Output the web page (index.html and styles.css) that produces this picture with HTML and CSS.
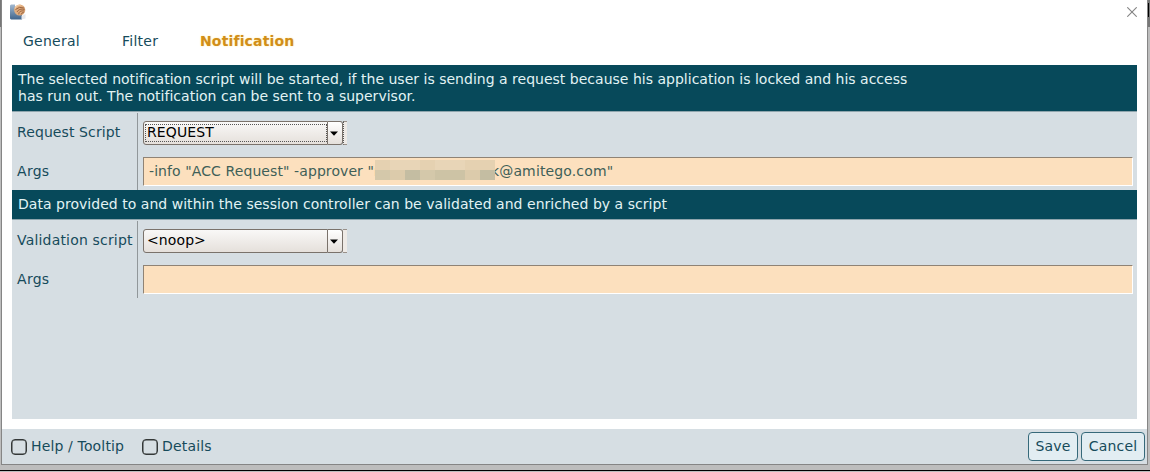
FILE: index.html
```
<!DOCTYPE html>
<html lang="en">
<head>
<meta charset="utf-8">
<title>Notification settings</title>
<link rel="stylesheet" href="styles.css">
</head>
<body>
<div class="desktop">
  <main class="window">
    <header class="titlebar">
      <svg class="app-icon" width="16" height="16" viewBox="0 0 16 16">
        <defs>
          <linearGradient id="blue" x1="0" y1="0" x2="0" y2="1"><stop offset="0" stop-color="#a3b9d0"/><stop offset="1" stop-color="#41658c"/></linearGradient>
          <clipPath id="disc"><circle cx="9.700" cy="6" r="5"/></clipPath>
        </defs>
        <path d="M0 1.500l1-1h4v7l7 3v5H1l-1-1z" fill="url(#blue)"/>
        <path d="M11.500 12l4-2v4.500l-4 1z" fill="#e6e9ee"/>
        <circle cx="9.700" cy="6" r="5.600" fill="#e0ac7e"/>
        <g clip-path="url(#disc)" fill="none" stroke="#85502f" stroke-width=".75">
          <path d="M5.500 5.500q3.500-3.500 9-1.500M7 8q2-4 8-2.500M8.700 10.500q0-4.500 6-3.500M11 11q0-3 4-2.500"/>
        </g>
        <path d="M4.800 4.500q2-3.500 6-3.500" fill="none" stroke="#f3cda5" stroke-width="1.200"/>
      </svg>
      <svg class="close" width="10" height="10" viewBox="0 0 10 10"><path d="M.3.3l9.400 9.400M9.700.3L.3 9.700" stroke="#858585" stroke-width="1.100"/><path d="M4 4h2v2H4z" fill="#888"/></svg>
    </header>
    <nav class="tabs">
      <span class="tab general">General</span>
      <span class="tab filter">Filter</span>
      <span class="tab active">Notification</span>
    </nav>
    <section class="panel">
      <div class="banner tall"><span class="intro">The selected notification script will be started, if the user is sending a request because his application is locked and his access</span><br><span class="intro">has run out. The notification can be sent to a supervisor.</span></div>
      <div class="form">
        <div class="labels"><label class="request">Request Script</label><label class="short">Args</label></div>
        <div class="fields">
          <div class="combo focused"><span class="value"><span class="text">REQUEST</span></span><span class="arrow"><svg width="8" height="5" viewBox="0 0 8 5"><path d="M0 .5h8L4 4.800z"/></svg></span><span class="stub"></span></div>
          <div class="entry"><span class="args">-info "ACC Request" -approver "r</span><svg class="mask" width="120" height="20" viewBox="0 0 120 20" shape-rendering="crispEdges"><path fill="#e5d1b1" d="M0 0h120v10H0z"/><path fill="#e8d5b7" d="M15 0h30v10H15zM60 0h30v10H60z"/><path fill="#dccbab" d="M0 10h120v10H0z"/><path fill="#d4c8aa" d="M0 10h15v10H0zM45 10h15v10H45z"/><path fill="#c4bda2" d="M30 10h15v10H30zM105 10h15v10h-15z"/><path fill="#cdc3a5" d="M60 10h30v10H60z"/></svg><span class="tail">k@amitego.com"</span></div>
        </div>
      </div>
      <div class="banner"><span class="hint">Data provided to and within the session controller can be validated and enriched by a script</span></div>
      <div class="form">
        <div class="labels"><label class="validation">Validation script</label><label class="short">Args</label></div>
        <div class="fields">
          <div class="combo"><span class="value"><span class="text">&lt;noop&gt;</span></span><span class="arrow"><svg width="8" height="5" viewBox="0 0 8 5"><path d="M0 .5h8L4 4.800z"/></svg></span><span class="stub"></span></div>
          <div class="entry"></div>
        </div>
      </div>
    </section>
    <footer class="footer">
      <label class="check"><span class="box"></span><span>Help / Tooltip</span></label>
      <label class="check details"><span class="box"></span><span>Details</span></label>
      <span class="spacer"></span>
      <button class="save">Save</button>
      <button class="cancel">Cancel</button>
    </footer>
  </main>
  <div class="edge"><div class="edge-dark"></div></div>
</div>
</body>
</html>
```
FILE: styles.css
```
* { box-sizing: border-box; }
body {
  margin: 0;
  width: 1150px;
  height: 472px;
  overflow: hidden;
  background: #bdbdbd;
  font: 14px/17px "DejaVu Sans", sans-serif;
  color: #164b5b;
  white-space: nowrap;
}
.desktop {
  display: flex;
  height: 471px;
  padding-left: 1px;
  border-bottom: 1px solid #000;
  background: linear-gradient(#777 27px, #bdbdbd 27px);
}
.window {
  display: flex;
  flex-direction: column;
  width: 1147px;
  height: 465px;
  border: 1px solid #858585;
  border-top: 0;
  background: #fff;
}
.edge { width: 2px; height: 27px; padding-top: 3px; background: #777; }
.edge-dark { width: 1px; height: 14px; background: #000; }
.titlebar {
  display: flex;
  justify-content: space-between;
  height: 30px;
  padding: 4px 10px 0 8px;
}
.close { margin-top: 3px; }
.tabs { display: flex; height: 35px; padding: 3px 0 0 21px; }
.tab { letter-spacing: .25px; }
.general { width: 99px; }
.filter { width: 78px; }
.active { font-weight: bold; letter-spacing: .15px; color: #d18e18; text-shadow: 0 0 2px #ffe79b; }
.panel { height: 354px; margin: 0 10px; background: #d6dee3; }
.banner {
  height: 30px;
  padding: 6px 6px 0;
  background: #07495a;
  color: #e2f3f4;
  border-bottom: 1px solid #8fa5ad;
}
.intro { letter-spacing: .01px; }
.hint { letter-spacing: .03px; }
.tall { height: 47px; }
.form { display: flex; height: 78px; padding-top: 1px; }
.labels { width: 126px; padding: 11px 0 0 5px; border-right: 1px solid #91979a; }
.labels label { display: block; height: 39px; }
.labels .validation { letter-spacing: .18px; }
.labels .request { letter-spacing: .1px; }
.labels .short { letter-spacing: .3px; }
.fields { flex: 1; padding: 8px 4px 0 5px; }
.combo {
  display: flex;
  width: 204px;
  height: 24px;
  color: #000;
}
.value {
  width: 185px;
  padding: 2px 0 2px 1px;
  border: 1px solid #7a726b;
  border-radius: 3px 0 0 3px;
  background: linear-gradient(#f9f8f7, #e5e0db);
}
.text {
  display: block;
  height: 18px;
  padding-left: 1px;
  border: 1px solid transparent;
  line-height: 15px;
  letter-spacing: .1px;
}
.focused .text { border: 1px dotted #555; }
.arrow {
  display: grid;
  place-items: center;
  width: 15px;
  border: 1px solid #7a726b;
  border-left: 0;
  border-radius: 0 3px 3px 0;
  background: linear-gradient(#fff, #e5e0db);
}
.arrow svg { margin-right: 2px; }
.stub { width: 4px; border: 1px solid #999089; border-width: 1px 0; background: #eeeae6; }
.focused .stub { border-left: 1px dotted #555; }
.entry {
  display: flex;
  height: 29px;
  margin-top: 12px;
  padding: 5px 5px 0;
  border: 1px solid #8f8375;
  border-right-color: #fff;
  border-bottom-color: #fff;
  background: #fce0be;
  color: #3f5f58;
}
.args { width: 231px; letter-spacing: .09px; }
.mask { position: relative; flex: none; margin: -3px 0 0 -5px; }
.tail { margin-left: -4px; letter-spacing: .14px; }
.footer {
  display: flex;
  height: 35px;
  margin-top: 10px;
  padding: 3px 2px 3px 9px;
  background: #d6dee3;
}
.check { display: flex; gap: 4px; padding-top: 6px; letter-spacing: .15px; }
.box { width: 16px; height: 16px; margin-top: 1px; border: 1.500px solid #343838; border-radius: 4px; box-shadow: inset 0 0 0 .5px #343838; }
.details { margin-left: 18px; }
.spacer { flex: 1; }
button {
  height: 29px;
  padding: 0;
  border: 1px solid #36697a;
  border-radius: 4px;
  background: #e2edf2;
  color: #164b5b;
  font: inherit;
  letter-spacing: .2px;
}
.save { width: 50px; margin-right: 3px; }
.cancel { width: 64px; }
```
